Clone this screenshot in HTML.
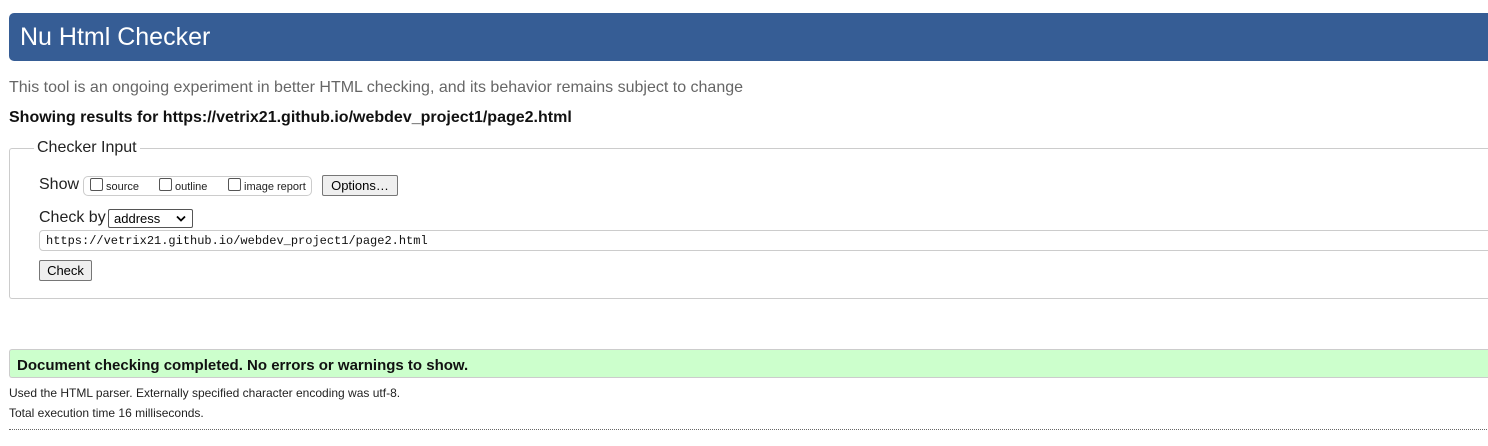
<!DOCTYPE html>
<html><head><meta charset="utf-8"><style>
body{margin:0;width:1488px;height:446px;overflow:hidden;background:#fff;font-family:"Liberation Sans",Arial,sans-serif;position:relative;color:#000}
.a{position:absolute;white-space:nowrap}
.hdr{left:9px;top:13px;width:1490px;height:48px;background:#365d95;border-radius:5px 0 0 5px}
.hdr span{position:absolute;left:11px;top:10px;font-size:25px;color:#fff}
.cb{display:inline-block;width:11px;height:11px;border:1px solid #555;border-radius:2px;vertical-align:-1px;margin-right:3px;background:#fff}
.btn{border:1px solid #767676;background:#efefef;border-radius:2px;font-size:13px;text-align:center;box-sizing:border-box}
</style></head><body>
<div class="a hdr"><span>Nu Html Checker</span></div>
<div class="a" style="left:9px;top:79px;font-size:16px;color:#666">This tool is an ongoing experiment in better HTML checking, and its behavior remains subject to change</div>
<div class="a" style="left:9px;top:109px;font-size:16px;font-weight:bold;color:#111">Showing results for https://vetrix21.github.io/webdev_project1/page2.html</div>
<div class="a" style="left:9px;top:148px;width:1490px;height:149px;border:1px solid #ccc;border-right:none;border-radius:3px 0 0 3px"></div>
<div class="a" style="left:34px;top:139px;background:#fff;padding:0 3px;font-size:16px;color:#222">Checker Input</div>
<div class="a" style="left:39px;top:176px;font-size:16px;color:#222">Show</div>
<div class="a" style="left:83px;top:176px;width:227px;height:18px;border:1px solid #ccc;border-radius:5px"></div>
<div class="a" style="left:90px;top:178px;font-size:11px;color:#222"><span class="cb"></span>source</div>
<div class="a" style="left:159px;top:178px;font-size:11px;color:#222"><span class="cb"></span>outline</div>
<div class="a" style="left:228px;top:178px;font-size:11px;color:#222"><span class="cb"></span>image report</div>
<div class="a btn" style="left:322px;top:175px;width:76px;height:21px;line-height:19px">Options…</div>
<div class="a" style="left:39px;top:209px;font-size:16px;color:#222">Check by</div>
<div class="a" style="left:108px;top:209px;width:85px;height:19px;border:1px solid #555;border-radius:2px;box-sizing:border-box;font-size:13px;line-height:17px;padding-left:5px">address<svg style="position:absolute;right:6px;top:5px" width="10" height="7" viewBox="0 0 10 7"><path d="M1 1.5L5 5.5 9 1.5" stroke="#000" stroke-width="1.8" fill="none"/></svg></div>
<div class="a" style="left:39px;top:230px;width:1460px;height:21px;border:1px solid #ccc;border-radius:4px;box-sizing:border-box;font-family:'Liberation Mono',monospace;font-size:12px;line-height:21px;padding-left:6px;color:#111">https://vetrix21.github.io/webdev_project1/page2.html</div>
<div class="a btn" style="left:39px;top:260px;width:53px;height:21px;line-height:19px">Check</div>
<div class="a" style="left:9px;top:349px;width:1490px;height:29px;background:#ccffcc;border:1px solid #ccc;border-right:none;border-radius:3px 0 0 3px;box-sizing:border-box"></div>
<div class="a" style="left:17px;top:357px;font-size:15px;font-weight:bold;color:#111">Document checking completed. No errors or warnings to show.</div>
<div class="a" style="left:9px;top:386px;font-size:12px;color:#222">Used the HTML parser. Externally specified character encoding was utf-8.</div>
<div class="a" style="left:9px;top:406px;font-size:12px;color:#222">Total execution time 16 milliseconds.</div>
<div class="a" style="left:9px;top:429px;width:1480px;border-top:1px dotted #666"></div>
</body></html>
